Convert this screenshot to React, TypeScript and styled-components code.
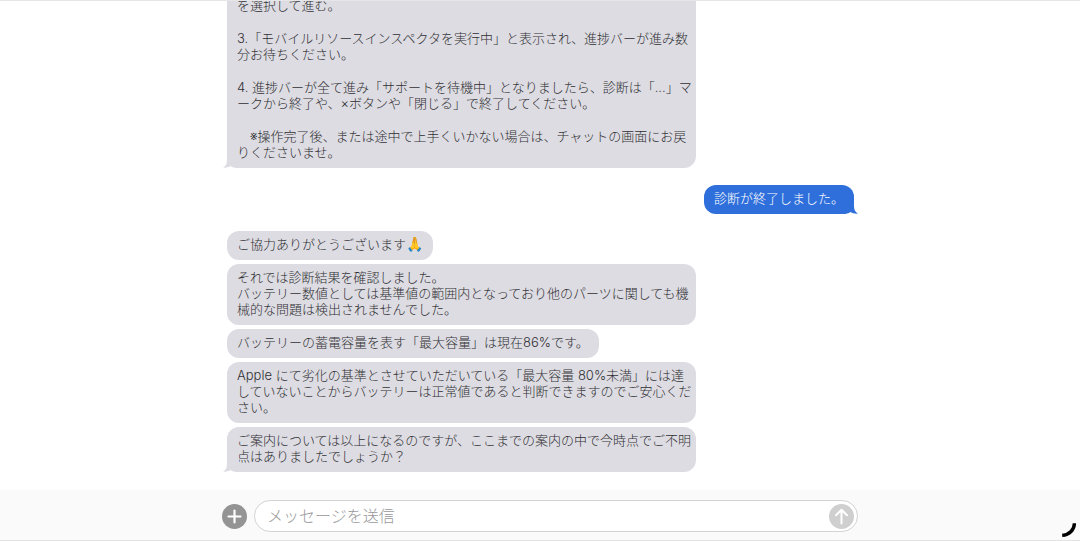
import React, { useState } from "react";
import styled, { createGlobalStyle } from "styled-components";

const GlobalStyle = createGlobalStyle`
  *, *::before, *::after { box-sizing: border-box; }
  body {
    margin: 0;
    background: #ffffff;
    font-family: Inter, "Noto Sans CJK JP", sans-serif;
    font-weight: 300;
  }
`;

const RECEIVED = "#dddce2";
const SENT = "#2f6fdb";

const Page = styled.div`
  display: flex;
  flex-direction: column;
  height: 100vh;
  border-top: 1px solid #e6e6e8;
`;

const Log = styled.main`
  flex: 1;
  min-height: 0;
  overflow: hidden;
  display: flex;
  flex-direction: column;
  justify-content: flex-end;
  align-items: center;
  padding-bottom: 18px;
`;

const Thread = styled.div`
  display: flex;
  flex-direction: column;
  gap: 17px;
  width: 100%;
  max-width: 636px;
  padding: 0 4px 0 5px;
`;

const Group = styled.section<{ $sent?: boolean }>`
  display: flex;
  flex-direction: column;
  gap: 4px;
  align-items: ${(p) => (p.$sent ? "flex-end" : "flex-start")};
`;

const Bubble = styled.div<{ $sent?: boolean; $continued?: boolean }>`
  position: relative;
  display: flex;
  flex-direction: column;
  gap: 17px;
  max-width: 469px;
  padding: 5px 10px 8px;
  border-radius: ${(p) => (p.$continued ? "0 0 12px 12px" : "12px")};
  background: ${(p) => (p.$sent ? SENT : RECEIVED)};
  color: ${(p) => (p.$sent ? "#ffffff" : "#303034")};
`;

const Text = styled.p`
  margin: 0;
  font-size: 13px;
  line-height: 16px;
  white-space: pre;
`;

const Emoji = styled.span`
  font-size: 14px;
  line-height: 1;
`;

const Tail = styled.svg<{ $sent?: boolean }>`
  position: absolute;
  bottom: 0;
  ${(p) => (p.$sent ? "right: -4px; transform: scaleX(-1);" : "left: -4px;")}
`;

const Composer = styled.form`
  display: flex;
  justify-content: center;
  background: #fafafa;
  border-bottom: 1px solid #e2e2e2;
  padding: 10px 0 8px;
`;

const ComposerRow = styled.div`
  display: flex;
  align-items: center;
  gap: 7px;
  width: 100%;
  max-width: 636px;
`;

const RoundButton = styled.button<{ $color: string }>`
  display: flex;
  flex: none;
  width: 25px;
  height: 25px;
  padding: 0;
  border: 0;
  border-radius: 50%;
  background: ${(p) => p.$color};
`;

const Field = styled.div`
  display: flex;
  flex: 1;
  align-items: center;
  height: 32px;
  padding: 0 3px 0 12px;
  border: 1px solid #d4d4d6;
  border-radius: 16px;
  background: #ffffff;
`;

const Input = styled.input`
  flex: 1;
  min-width: 0;
  padding: 0;
  border: 0;
  outline: 0;
  background: transparent;
  font: inherit;
  font-size: 16px;
  line-height: 24px;
  color: #303034;
  &::placeholder { color: #98989b; opacity: 1; }
`;

const Spinner = styled.svg`
  position: fixed;
  right: 3px;
  bottom: 3px;
`;

type Message = { paragraphs: string[]; emoji?: string; continued?: boolean };
type MessageGroup = { sent?: boolean; messages: Message[] };

const groups: MessageGroup[] = [
  {
    messages: [
      {
        continued: true,
        paragraphs: [
          "を選択して進む。",
          "3.「モバイルリソースインスペクタを実行中」と表示され、進捗バーが進み数\n分お待ちください。",
          "4. 進捗バーが全て進み「サポートを待機中」となりましたら、診断は「...」マ\nークから終了や、×ボタンや「閉じる」で終了してください。",
          "　※操作完了後、または途中で上手くいかない場合は、チャットの画面にお戻\nりくださいませ。",
        ],
      },
    ],
  },
  { sent: true, messages: [{ paragraphs: ["診断が終了しました。"] }] },
  {
    messages: [
      { paragraphs: ["ご協力ありがとうございます"], emoji: "🙏" },
      {
        paragraphs: [
          "それでは診断結果を確認しました。\nバッテリー数値としては基準値の範囲内となっており他のパーツに関しても機\n械的な問題は検出されませんでした。",
        ],
      },
      { paragraphs: ["バッテリーの蓄電容量を表す「最大容量」は現在86%です。"] },
      {
        paragraphs: [
          "Apple にて劣化の基準とさせていただいている「最大容量 80%未満」には達\nしていないことからバッテリーは正常値であると判断できますのでご安心くだ\nさい。",
        ],
      },
      {
        paragraphs: [
          "ご案内については以上になるのですが、ここまでの案内の中で今時点でご不明\n点はありましたでしょうか？",
        ],
      },
    ],
  },
];

function BubbleTail({ sent }: { sent?: boolean }) {
  return (
    <Tail $sent={sent} width="16" height="14" viewBox="0 0 16 14" aria-hidden="true">
      <path
        d="M4 0 V6 C4 9.5 3 11.8 0 13.6 C3 14 5.5 13.2 7.5 12 C9.5 13.4 12 14 16 14 V0 Z"
        fill={sent ? SENT : RECEIVED}
      />
    </Tail>
  );
}

export default function App() {
  const [draft, setDraft] = useState("");
  return (
    <Page lang="ja">
      <GlobalStyle />
      <Log>
        <Thread>
          {groups.map((group, g) => (
            <Group key={g} $sent={group.sent}>
              {group.messages.map((message, m) => (
                <Bubble key={m} $sent={group.sent} $continued={message.continued}>
                  {m === group.messages.length - 1 && <BubbleTail sent={group.sent} />}
                  {message.paragraphs.map((text, t) => (
                    <Text key={t}>
                      {text}
                      {message.emoji && <Emoji>{message.emoji}</Emoji>}
                    </Text>
                  ))}
                </Bubble>
              ))}
            </Group>
          ))}
        </Thread>
      </Log>
      <Composer onSubmit={(e) => e.preventDefault()}>
        <ComposerRow>
          <RoundButton type="button" aria-label="添付" $color="#949494">
            <svg width="25" height="25" viewBox="0 0 25 25" fill="none" stroke="#ffffff" strokeWidth="2.2" strokeLinecap="round">
              <path d="M12.5 6.5v12M6.5 12.5h12" />
            </svg>
          </RoundButton>
          <Field>
            <Input
              aria-label="メッセージを送信"
              placeholder="メッセージを送信"
              value={draft}
              onChange={(e) => setDraft(e.target.value)}
            />
            <RoundButton type="submit" aria-label="送信" $color="#cfcfcf">
              <svg width="25" height="25" viewBox="0 0 25 25" fill="none" stroke="#ffffff" strokeWidth="2" strokeLinecap="round" strokeLinejoin="round">
                <path d="M12.5 19.5V6M7 11.2L12.5 5.7L18 11.2" />
              </svg>
            </RoundButton>
          </Field>
        </ComposerRow>
      </Composer>
      <Spinner width="16" height="16" viewBox="0 0 16 16" fill="none" aria-hidden="true">
        <path d="M13.4 1.2C13.4 7.5 8.5 12.8 1.2 13.4" stroke="#000000" strokeWidth="3.4" />
      </Spinner>
    </Page>
  );
}
